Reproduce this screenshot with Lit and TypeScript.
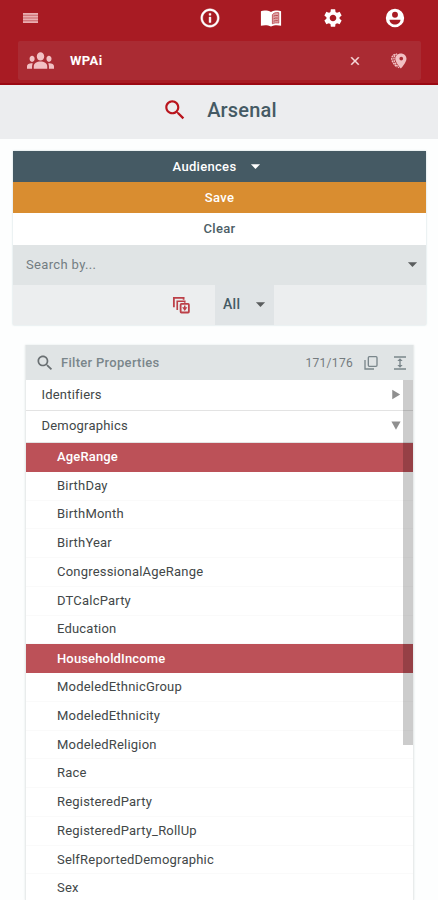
import { LitElement, html, css, svg } from "lit";
import { customElement, property, state } from "lit/decorators.js";
import { classMap } from "lit/directives/class-map.js";

const icons: Record<string, unknown> = {
  menu: svg`<path d="M2.500 4.500h19v2.800h-19zM2.500 8.700h19v2.600h-19zM2.500 12.700h19v2.600h-19zM2.500 16.700h19v2.800h-19z"/><path opacity=".5" d="M2.500 4.500h19v15h-19z"/>`,
  info: svg`<path d="M11 7h2v2h-2zm0 4h2v6h-2zm1-9C6.480 2 2 6.480 2 12s4.480 10 10 10 10-4.480 10-10S17.520 2 12 2zm0 18c-4.410 0-8-3.590-8-8s3.590-8 8-8 8 3.590 8 8-3.590 8-8 8z" stroke="currentColor" stroke-width=".5"/>`,
  book: svg`<path d="M12 5.500C9 3.800 4 3.500 1 4.500V20.500c3.500-1 7.500-1 11 .8 3.500-1.800 7.500-1.800 11-.8V4.500C20 3.500 15 3.800 12 5.500z"/><path d="M13.500 8.500c1-2 4-2.800 7-2.300v11.300c-2.500-.5-5-.2-7 .8z" fill="#dfa3a6" stroke="#b8474d" stroke-width=".9"/><path d="M14.800 9.900c1.500-.7 3-.8 4.700-.6M14.800 12.700c1.500-.7 3-.8 4.700-.6M14.800 15.500c1.500-.7 3-.8 4.700-.6" fill="none" stroke="#b8474d" stroke-width="1"/>`,
  settings: svg`<path d="M19.140 12.940c.04-.3.06-.61.06-.94 0-.32-.02-.64-.07-.94l2.030-1.580c.18-.14.23-.41.12-.61l-1.920-3.320c-.12-.22-.37-.29-.59-.22l-2.390.96c-.5-.38-1.030-.7-1.620-.94l-.36-2.540c-.04-.24-.24-.41-.48-.41h-3.840c-.24 0-.43.17-.47.41l-.36 2.540c-.59.24-1.130.57-1.620.94l-2.390-.96c-.22-.08-.47 0-.59.22L2.740 8.870c-.12.21-.08.47.12.61l2.030 1.580c-.05.3-.09.63-.09.94s.02.64.07.94l-2.030 1.580c-.18.14-.23.41-.12.61l1.920 3.320c.12.22.37.29.59.22l2.390-.96c.5.38 1.030.7 1.620.94l.36 2.540c.05.24.24.41.48.41h3.840c.24 0 .44-.17.47-.41l.36-2.540c.59-.24 1.130-.56 1.620-.94l2.390.96c.22.08.47 0 .59-.22l1.920-3.320c.12-.22.07-.47-.12-.61l-2.010-1.580zM12 15.600c-1.980 0-3.600-1.620-3.600-3.600s1.620-3.600 3.600-3.600 3.600 1.620 3.600 3.600-1.620 3.600-3.600 3.600z"/>`,
  account: svg`<path fill-rule="evenodd" d="M12 2a10 10 0 1 0 0 20 10 10 0 0 0 0-20zm0 3.200a3.200 3.200 0 1 1 0 6.400 3.200 3.200 0 0 1 0-6.400zM6 13.800h12c0 2.800-3 5.400-6 5.400s-6-2.600-6-5.400z"/>`,
  groups: svg`<path d="M12 12.750c1.630 0 3.070.39 4.240.9 1.080.48 1.760 1.560 1.760 2.730V18H6v-1.610c0-1.180.68-2.260 1.760-2.730 1.170-.52 2.610-.91 4.240-.91zM4.500 13c1.300 0 2.300-1 2.300-2.200s-1-2.200-2.300-2.200-2.200 1-2.200 2.200 1 2.200 2.200 2.200zm.63 1.100c-.37-.06-.74-.1-1.130-.1-.99 0-1.930.21-2.780.58C.48 14.900 0 15.620 0 16.430V18h4.500v-1.610c0-.83.23-1.610.63-2.290zM19.500 13c1.300 0 2.300-1 2.300-2.200s-1-2.200-2.300-2.200-2.200 1-2.200 2.200 1 2.200 2.200 2.200zm4.500 3.430c0-.81-.48-1.530-1.220-1.850-.85-.37-1.790-.58-2.780-.58-.39 0-.76.04-1.130.1.4.68.63 1.460.63 2.290V18H24v-1.570zM12 6c1.800 0 3.300 1.340 3.300 3s-1.500 3-3.300 3-3.300-1.340-3.300-3 1.500-3 3.300-3z"/>`,
  close: svg`<path d="M19 6.410 17.590 5 12 10.590 6.410 5 5 6.410 10.590 12 5 17.590 6.410 19 12 13.410 17.590 19 19 17.590 13.410 12z" stroke="currentColor" stroke-width=".7"/>`,
  pins: svg`<path fill-rule="evenodd" d="M14.500 2C10.500 2 7 5 7 9c0 5 7.500 13 7.500 13S22 14 22 9c0-4-3.500-7-7.500-7zm.5 4.300a2.500 2.500 0 1 1 0 5 2.500 2.500 0 0 1 0-5z"/><path d="M9.500 2.500C5 4 4.500 9 6 13c1.500 3.300 4 6 6 8M6.500 3C2 5 1.500 9 3.500 13c1.500 3 3.500 5 5.500 7" fill="none" stroke="currentColor" stroke-width="1.800" stroke-dasharray="2.500 .9"/>`,
  search: svg`<path d="M15.500 14h-.79l-.28-.27C15.410 12.590 16 11.110 16 9.500 16 5.910 13.090 3 9.500 3S3 5.910 3 9.500 5.910 16 9.500 16c1.610 0 3.090-.59 4.230-1.570l.27.28v.79l5 4.990L20.490 19l-4.990-5zm-6 0C7.010 14 5 11.990 5 9.500S7.010 5 9.500 5 14 7.010 14 9.500 11.990 14 9.500 14z"/>`,
  down: svg`<path d="M2 7h20L12 17.500z"/>`,
  open: svg`<path d="M1 3h22L12 21.500z"/>`,
  right: svg`<path d="M3 1.500v21L22 12z"/>`,
  stack: svg`<g fill="none" stroke="currentColor"><path stroke-width="2.400" d="M2.500 15V2.500h13v2.500"/><path stroke-width="2.200" d="M7 18.500V7h10v2"/><rect stroke-width="2.400" x="11.500" y="10.500" width="11" height="11.500" rx="1"/></g><path d="M16 12.500h2v2.500h2.500L17 20l-3.500-5H16z"/>`,
  copy: svg`<g fill="none" stroke="currentColor" stroke-width="2"><rect x="8" y="2.500" width="13" height="14.500" rx="1.500"/><path d="M3 7.500V21h13.500"/></g>`,
  height: svg`<path d="M3 2h18v2H3zm0 18h18v2H3zM13 9h3l-4-4.200L8 9h3v6H8l4 4.200 4-4.200h-3z"/>`,
};

@customElement("ui-icon")
class UiIcon extends LitElement {
  @property() name = "";
  static styles = css`
    :host { display: block; flex: none; width: 20px; height: 20px; }
    svg { display: block; width: 100%; height: 100%; fill: currentColor; }
  `;
  render() {
    return html`<svg viewBox="0 0 24 24" preserveAspectRatio="none" aria-hidden="true">${icons[this.name]}</svg>`;
  }
}

@customElement("app-root")
class AppRoot extends LitElement {
  @state() private selected = new Set(["AgeRange", "HouseholdIncome"]);

  private demographics = [
    "AgeRange", "BirthDay", "BirthMonth", "BirthYear", "CongressionalAgeRange", "DTCalcParty",
    "Education", "HouseholdIncome", "ModeledEthnicGroup", "ModeledEthnicity", "ModeledReligion",
    "Race", "RegisteredParty", "RegisteredParty_RollUp", "SelfReportedDemographic", "Sex",
  ];

  static styles = css`
    :host {
      display: block; height: 900px; overflow: hidden; background: #fdfefe;
      font-family: Roboto, "Liberation Sans", sans-serif; font-size: 13px; color: #424748;
    }
    * { box-sizing: border-box; }
    header { height: 85px; background: #a81b23; border-bottom: 2px solid #9b0812; color: #fff; padding: 0 17px 0 18px; }
    .bar { height: 41px; display: flex; align-items: center; padding: 0 15.5px 5px 3px; }
    .bar .menu { width: 19px; height: 16px; color: #e9adb0; margin-right: auto; }
    .tools { display: flex; gap: 39.6px; align-items: center; }
    .tools ui-icon { width: 22px; height: 22px; }
    .client { height: 39px; background: #aa2b33; border-radius: 2px; display: flex; align-items: center; padding: 0 13.5px 0 9px; color: #f2c0c3; }
    .client .groups { width: 27px; height: 33px; }
    .client .name { flex: 1; margin-left: 16px; color: #fff; font-weight: 700; font-size: 13px; letter-spacing: .4px; }
    .client .close { width: 14px; height: 14px; margin-right: 27.5px; color: #f9dfe0; }
    .client .pins { width: 18px; height: 18px; }
    .title { height: 54px; background: #ecedef; display: flex; align-items: center; justify-content: center; gap: 19px; color: #455a64; font-size: 20px; font-weight: 500; letter-spacing: .2px; padding: 0 0 4px 1px; }
    .title ui-icon { width: 26px; height: 26px; color: #b9151d; }
    .card { margin: 12px 12px 0 13px; box-shadow: 0 0 2px #cbd9db; color: #455a64; }
    .btn { height: 31px; display: flex; align-items: center; justify-content: center; font-weight: 500; letter-spacing: .3px; }
    .audiences { background: #455a64; color: #fff; gap: 14px; padding-right: 5px; }
    .audiences ui-icon, .select ui-icon, .all ui-icon { width: 11px; height: 11px; }
    .save { background: #d98d30; color: #fff; }
    .clear { background: #fff; color: #4c5e66; height: 32px; padding-bottom: 2px; }
    .select { height: 40px; background: #e0e4e5; display: flex; align-items: center; justify-content: space-between; padding: 0 8px 1px 13px; color: #737d82; letter-spacing: .35px; }
    .select ui-icon, .all ui-icon { color: #5a5d5e; }
    .scope { height: 40px; background: #eceeef; display: flex; }
    .scope .pick { width: 202px; display: flex; align-items: center; justify-content: flex-end; padding-right: 25px; color: #bc4048; }
    .pick ui-icon { width: 18px; height: 18px; }
    .all { width: 59px; background: #e0e4e6; display: flex; align-items: center; justify-content: space-between; padding: 0 8px 2px; font-size: 14px; font-weight: 500; letter-spacing: .3px; }
    .panel { margin: 20px 24px 0 25px; border: 1px solid #e9ecec; border-width: 0 1px; height: 555px; overflow: hidden; background: #fff; box-shadow: 0 0 2px #e4e8e8; }
    .filter { height: 35px; background: #e0e4e5; display: flex; align-items: center; padding: 0 5px 0 9px; color: #7a868b; letter-spacing: .3px; }
    .filter .search { width: 20px; height: 20px; color: #6a7073; margin-right: 6px; }
    .filter .hint { flex: 1; font-weight: 500; }
    .filter .count { margin-right: 10px; font-size: 12px; letter-spacing: .3px; color: #747b7e; }
    .filter .copy { width: 16px; height: 16px; margin-right: 13px; }
    .filter .height { width: 16px; height: 16px; }
    .list { position: relative; }
    .group { height: 31px; display: flex; align-items: center; justify-content: space-between; padding: 0 12px 1px 15.5px; border-bottom: 1px solid #e3e3e3; letter-spacing: .2px; }
    .group.expanded { height: 32px; padding-bottom: 2px; }
    .group ui-icon { width: 10px; height: 11px; color: #8f8f8f; }
    .item { height: 28.77px; display: flex; align-items: center; padding: 0 31px 1px; border-bottom: 1px solid #fafafa; letter-spacing: .2px; }
    .item.on { background: #bc5158; color: #fff; border-color: #bc5158; font-weight: 500; letter-spacing: .15px; padding-bottom: 0; }
    .thumb { position: absolute; right: -1px; top: 0; width: 11px; height: 365px; background: rgba(0, 0, 0, .2); }
  `;

  private toggle(name: string) {
    const next = new Set(this.selected);
    next.has(name) ? next.delete(name) : next.add(name);
    this.selected = next;
  }

  render() {
    return html`
      <header>
        <div class="bar">
          <ui-icon class="menu" name="menu"></ui-icon>
          <div class="tools">
            ${["info", "book", "settings", "account"].map((n) => html`<ui-icon name=${n}></ui-icon>`)}
          </div>
        </div>
        <div class="client">
          <ui-icon class="groups" name="groups"></ui-icon>
          <span class="name">WPAi</span>
          <ui-icon class="close" name="close"></ui-icon>
          <ui-icon class="pins" name="pins"></ui-icon>
        </div>
      </header>
      <div class="title"><ui-icon name="search"></ui-icon><span>Arsenal</span></div>
      <section class="card">
        <div class="btn audiences"><span>Audiences</span><ui-icon name="down"></ui-icon></div>
        <div class="btn save">Save</div>
        <div class="btn clear">Clear</div>
        <div class="select"><span>Search by...</span><ui-icon name="down"></ui-icon></div>
        <div class="scope">
          <div class="pick"><ui-icon name="stack"></ui-icon></div>
          <div class="all"><span>All</span><ui-icon name="down"></ui-icon></div>
        </div>
      </section>
      <section class="panel">
        <div class="filter">
          <ui-icon class="search" name="search"></ui-icon>
          <span class="hint">Filter Properties</span>
          <span class="count">171/176</span>
          <ui-icon class="copy" name="copy"></ui-icon>
          <ui-icon class="height" name="height"></ui-icon>
        </div>
        <div class="list">
          <div class="group"><span>Identifiers</span><ui-icon name="right"></ui-icon></div>
          <div class="group expanded"><span>Demographics</span><ui-icon name="open"></ui-icon></div>
          ${this.demographics.map((name) => html`
            <div class=${classMap({ item: true, on: this.selected.has(name) })} @click=${() => this.toggle(name)}>${name}</div>
          `)}
          <div class="thumb"></div>
        </div>
      </section>
    `;
  }
}
